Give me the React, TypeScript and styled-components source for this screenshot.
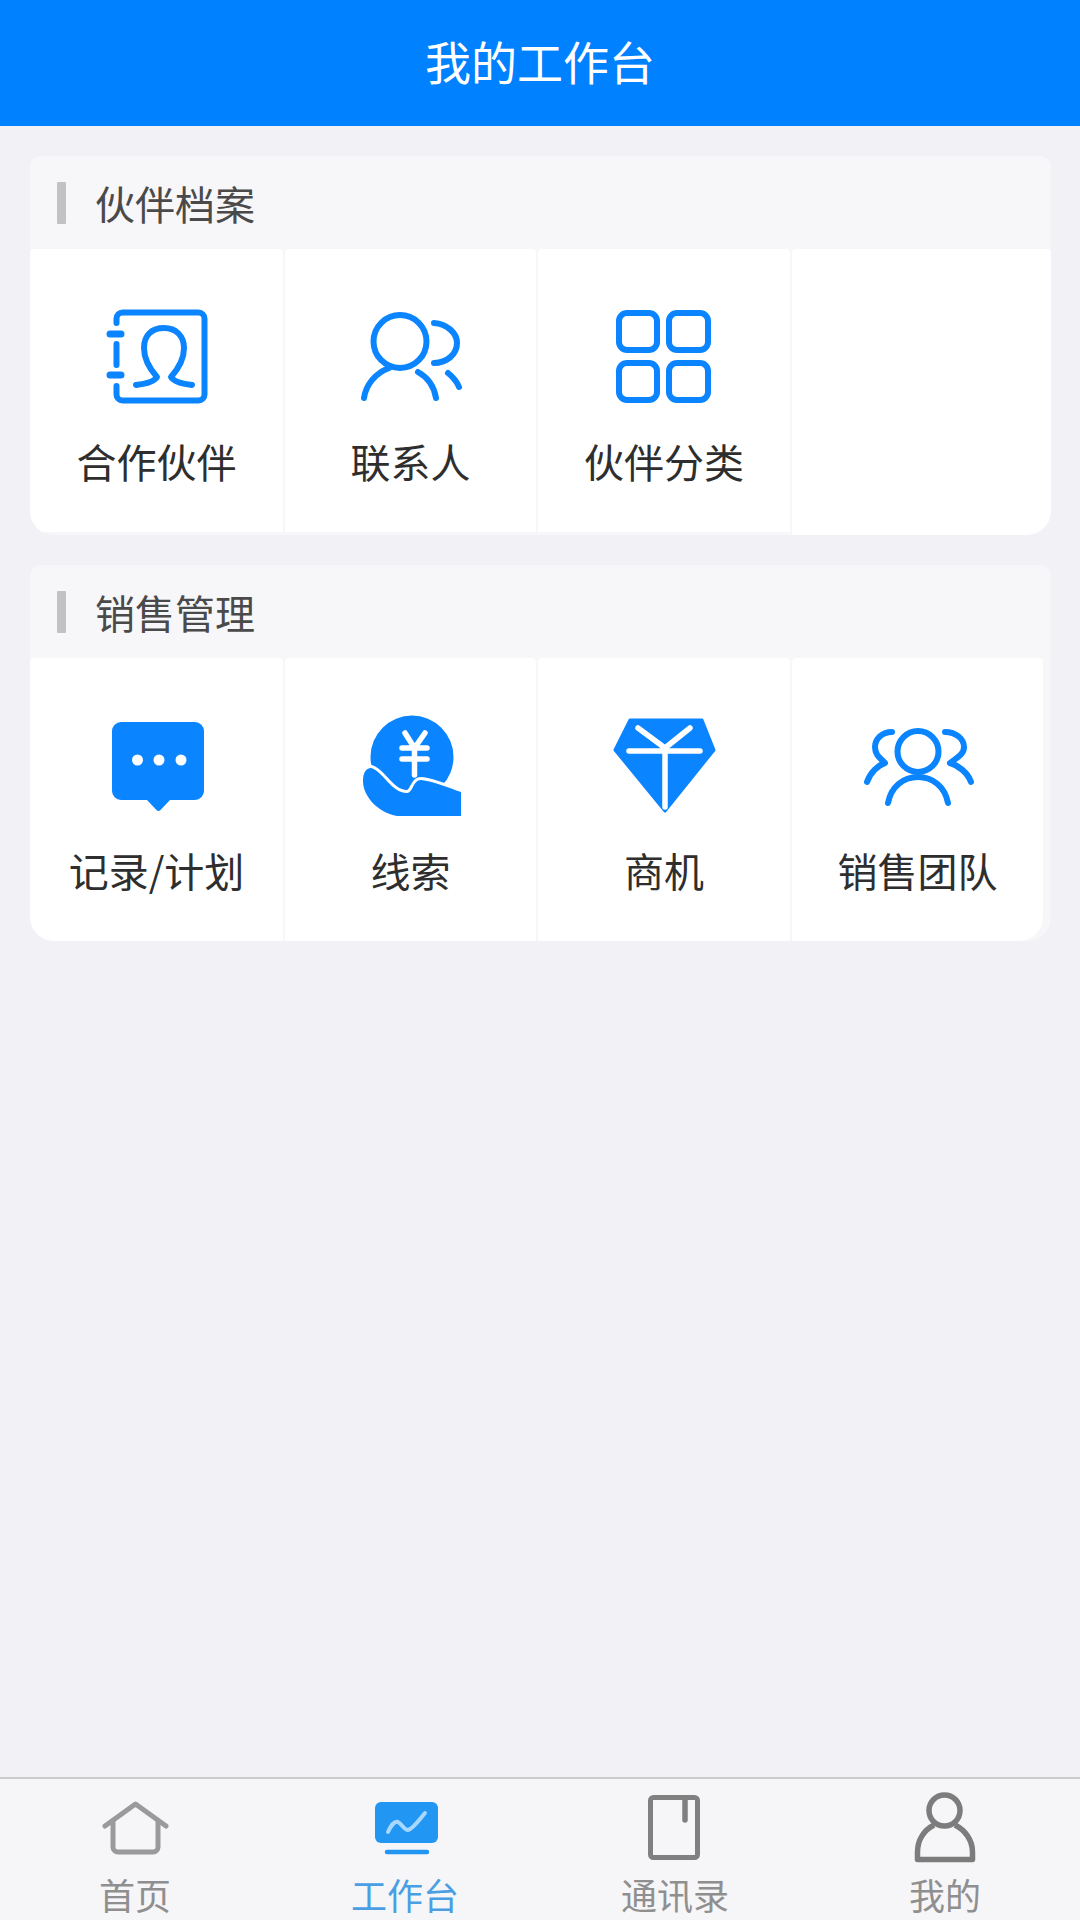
import React from 'react';
import styled, { createGlobalStyle } from 'styled-components';

const BLUE = '#0a84ff';

const GlobalStyle = createGlobalStyle`
  html, body {
    margin: 0;
    padding: 0;
    background: #f2f1f5;
  }
  body {
    font-family: "Noto Sans CJK SC", "Noto Sans", sans-serif;
  }
`;

const Page = styled.div`
  width: 1080px;
  height: 1920px;
  display: flex;
  flex-direction: column;
  overflow: hidden;
  background: #f2f1f5;
`;

const Header = styled.header`
  height: 126px;
  flex: none;
  box-sizing: border-box;
  padding-bottom: 6px;
  display: flex;
  align-items: center;
  justify-content: center;
  background: #0081ff;
  color: #fff;
  font-size: 46px;
`;

const Content = styled.main`
  flex: 1;
  display: flex;
  flex-direction: column;
  gap: 30px;
  padding: 30px 29px 0 30px;
`;

const Card = styled.section`
  background: #f7f6f9;
  border-radius: 10px 10px 24px 24px;
  overflow: hidden;
`;

const CardHead = styled.div`
  height: 93px;
  display: flex;
  align-items: center;
  gap: 29px;
  padding-left: 27px;
  color: #4a4a4a;
  font-size: 40px;
`;

const HeadBar = styled.span`
  width: 9px;
  height: 42px;
  border-radius: 1px;
  background: #c2c2c2;
`;

const CellRow = styled.div<{ $inset?: number }>`
  display: grid;
  grid-template-columns: 253px 251px 252px 1fr;
  column-gap: 2px;
  align-items: start;
  padding-right: ${(p) => p.$inset ?? 0}px;
`;

const Cell = styled.div<{ $tall?: boolean }>`
  height: ${(p) => (p.$tall ? 286 : 283)}px;
  box-sizing: border-box;
  padding-top: 57px;
  display: flex;
  flex-direction: column;
  align-items: center;
  background: #fff;
  border-top-left-radius: 4px;
  border-top-right-radius: 4px;

  &:last-child {
    border-bottom-right-radius: 24px;
  }
`;

const CellIcon = styled.svg`
  width: 100px;
  height: 100px;
  overflow: visible;
  flex: none;
`;

const CellLabel = styled.div`
  margin-top: 30px;
  line-height: 50px;
  font-size: 40px;
  color: #2e2e2e;
  white-space: nowrap;
`;

const TabBar = styled.nav`
  height: 143px;
  flex: none;
  box-sizing: border-box;
  display: grid;
  grid-template-columns: repeat(4, 270px);
  border-top: 2px solid #cbcbcd;
  background: #f6f5f8;
  padding-top: 13px;
`;

const Tab = styled.div<{ $active?: boolean }>`
  display: flex;
  flex-direction: column;
  align-items: center;
  gap: 10px;
  font-size: 36px;
  line-height: 40px;
  color: ${(p) => (p.$active ? '#4a9fe3' : '#8f8f8f')};
`;

const TabIcon = styled.svg`
  width: 72px;
  height: 72px;
  overflow: visible;
  flex: none;
`;

const line = { fill: 'none', stroke: BLUE, strokeWidth: 6, strokeLinecap: 'round', strokeLinejoin: 'round' } as const;
const white = { fill: 'none', stroke: '#fff', strokeWidth: 5.5, strokeLinecap: 'round', strokeLinejoin: 'round' } as const;

const BookIcon = () => (
  <CellIcon viewBox="0 0 100 100">
    <path {...line} d="M9.500 17V12.500a6 6 0 0 1 6-6H91.500a6 6 0 0 1 6 6V88.500a6 6 0 0 1-6 6H15.500a6 6 0 0 1-6-6V80M9.500 38V59" />
    <path {...line} strokeWidth={7} d="M3 28H14M3 69H14" />
    <path {...line} d="M29 79C38 78 47 76 50 71C42 62 37 52 37 42C37 29 45 22 57 22C69 22 77 30 77 42C77 52 72 62 64 71C67 76 76 78 85 79" />
  </CellIcon>
);

const PeopleIcon = () => (
  <CellIcon viewBox="0 0 100 100">
    <circle {...line} cx="39" cy="35.500" r="26.500" />
    <path {...line} d="M3 92C5 78 15 67 28 62M57 66C66 71 73 80 75 92" />
    <path {...line} d="M73 17C86 18 96 27 96 37C96 48 86 57 73 57M87 67C92 71 96 76 98 81" />
  </CellIcon>
);

const GridIcon = () => (
  <CellIcon viewBox="0 0 100 100">
    <rect {...line} x="5" y="7" width="38" height="37" rx="8" />
    <rect {...line} x="55" y="7" width="39" height="37" rx="8" />
    <rect {...line} x="5" y="57" width="38" height="37" rx="8" />
    <rect {...line} x="55" y="57" width="39" height="37" rx="8" />
  </CellIcon>
);

const ChatIcon = () => (
  <CellIcon viewBox="0 0 100 100">
    <path
      fill={BLUE}
      d="M14 7H88a9 9 0 0 1 9 9V76a9 9 0 0 1-9 9H63L53.500 95a3 3 0 0 1-4 0L40 85H14a9 9 0 0 1-9-9V16a9 9 0 0 1 9-9Z"
    />
    <circle fill="#fff" cx="30.500" cy="45" r="5.500" />
    <circle fill="#fff" cx="52" cy="45" r="5.500" />
    <circle fill="#fff" cx="74" cy="45" r="5.500" />
  </CellIcon>
);

const CoinIcon = () => (
  <CellIcon viewBox="0 0 100 100">
    <circle fill={BLUE} cx="51" cy="42" r="41.500" />
    <path {...white} d="M44 18L53.500 33L64 18M41 33H66M41 44H66M53.500 33V60" />
    <path
      fill={BLUE}
      stroke="#fff"
      strokeWidth="6"
      paintOrder="stroke"
      d="M10 53C22 56 30 78 46 78C52 78 52 65 60 65C72 66 88 73 100 77V101H36C18 98 2 82 2 66C2 58 5 53 10 53Z"
    />
  </CellIcon>
);

const DiamondIcon = () => (
  <CellIcon viewBox="0 0 100 100">
    <path fill={BLUE} stroke={BLUE} strokeWidth="3" strokeLinejoin="round" d="M16 5H88L100 35L51 96L1 35Z" />
    <path {...white} d="M24 13L51 33L76 13M15 36H86M51 33V92" />
  </CellIcon>
);

const TeamIcon = () => (
  <CellIcon viewBox="0 0 100 100">
    <circle {...line} cx="50" cy="36.500" r="20.500" />
    <path {...line} d="M20 88C23 72 35 62 50 62C65 62 77 72 80 88" />
    <path {...line} d="M24 17C14 17 7 24 7 32C7 40 12 43 17 48C10 50 2 58 -1 67" />
    <path {...line} d="M77 17C88 17 96 24 96 32C96 40 88 43 82 48C90 50 100 58 103 67" />
  </CellIcon>
);

const HomeIcon = () => (
  <TabIcon viewBox="0 0 72 72">
    <g fill="none" stroke="#9a9a9a" strokeWidth="5" strokeLinecap="round" strokeLinejoin="round">
      <path d="M6 34L36.500 12L67 34" />
      <path d="M14 30V55a5 5 0 0 0 5 5H54a5 5 0 0 0 5-5V30" />
    </g>
  </TabIcon>
);

const DeskIcon = () => (
  <TabIcon viewBox="0 0 72 72">
    <rect x="6" y="10" width="63" height="41" rx="6" fill="#2196f3" />
    <path d="M19 40C22 33 26 29 29 30C33 32 35 38 39 38C44 37 50 28 56 21" fill="none" stroke="#a9d8ff" strokeWidth="4" strokeLinecap="round" />
    <path d="M18 60H58" fill="none" stroke="#2196f3" strokeWidth="4.500" strokeLinecap="round" />
  </TabIcon>
);

const ContactsIcon = () => (
  <TabIcon viewBox="0 0 72 72">
    <g fill="none" stroke="#808080" strokeWidth="5" strokeLinejoin="round">
      <rect x="11.500" y="5.500" width="47" height="60" rx="3" />
      <path d="M46 6V28" strokeWidth="5.500" strokeLinecap="round" />
    </g>
  </TabIcon>
);

const MeIcon = () => (
  <TabIcon viewBox="0 0 72 72">
    <g fill="none" stroke="#7c7c7c" strokeWidth="5.500" strokeLinejoin="round">
      <circle cx="35.500" cy="18.500" r="15.500" />
      <path d="M25 33C15 38 8.500 48 8.500 60V67.500H63.500V60C63.500 48 56 38 46 33" />
    </g>
  </TabIcon>
);

const sections = [
  {
    title: '伙伴档案',
    inset: 0,
    items: [
      { label: '合作伙伴', icon: <BookIcon /> },
      { label: '联系人', icon: <PeopleIcon /> },
      { label: '伙伴分类', icon: <GridIcon /> },
      { tall: true },
    ],
  },
  {
    title: '销售管理',
    inset: 8,
    items: [
      { label: '记录/计划', icon: <ChatIcon /> },
      { label: '线索', icon: <CoinIcon /> },
      { label: '商机', icon: <DiamondIcon /> },
      { label: '销售团队', icon: <TeamIcon /> },
    ],
  },
];

const tabs = [
  { label: '首页', icon: <HomeIcon /> },
  { label: '工作台', icon: <DeskIcon />, active: true },
  { label: '通讯录', icon: <ContactsIcon /> },
  { label: '我的', icon: <MeIcon /> },
];

const App = () => {
  return (
    <Page>
      <GlobalStyle />
      <Header>我的工作台</Header>
      <Content>
        {sections.map((section) => (
          <Card key={section.title}>
            <CardHead>
              <HeadBar />
              {section.title}
            </CardHead>
            <CellRow $inset={section.inset}>
              {section.items.map((item, i) => (
                <Cell key={i} $tall={item.tall}>
                  {item.icon}
                  {item.label && <CellLabel>{item.label}</CellLabel>}
                </Cell>
              ))}
            </CellRow>
          </Card>
        ))}
      </Content>
      <TabBar>
        {tabs.map((tab) => (
          <Tab key={tab.label} $active={tab.active}>
            {tab.icon}
            {tab.label}
          </Tab>
        ))}
      </TabBar>
    </Page>
  );
};

export default App;
